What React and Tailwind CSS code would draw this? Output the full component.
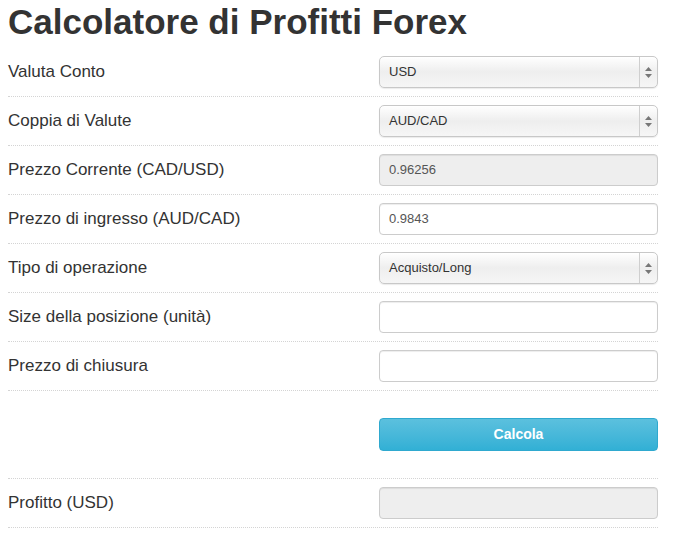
const rows = [
  { label: "Valuta Conto", type: "select", value: "USD" },
  { label: "Coppia di Valute", type: "select", value: "AUD/CAD" },
  { label: "Prezzo Corrente (CAD/USD)", type: "disabled", value: "0.96256" },
  { label: "Prezzo di ingresso (AUD/CAD)", type: "input", value: "0.9843" },
  { label: "Tipo di operazione", type: "select", value: "Acquisto/Long" },
  { label: "Size della posizione (unità)", type: "input", value: "" },
  { label: "Prezzo di chiusura", type: "input", value: "" },
];

const SelectBox = ({ value }) => (
  <div className="flex h-[32px] w-[279px] items-stretch rounded-[5px] border border-[#c8c8c8] bg-gradient-to-b from-[#ffffff] via-[#eeeeee] to-[#f6f6f6] shadow-[inset_0_1px_0_#fff,0_1px_1px_rgba(0,0,0,0.08)]">
    <div className="flex flex-1 items-center pl-[9px] text-[13px] text-[#333]">{value}</div>
    <div className="flex w-[18px] flex-col items-center justify-center border-l border-[#cfcfcf]">
      <svg width="7" height="11" viewBox="0 0 7 11">
        <path d="M3.5 0 L7 4 L0 4 Z" fill="#777" />
        <path d="M0 7 L7 7 L3.5 11 Z" fill="#777" />
      </svg>
    </div>
  </div>
);

const TextBox = ({ value, disabled }) => (
  <div
    className={`flex h-[32px] w-[279px] items-center rounded-[4px] border border-[#cccccc] pl-[9px] text-[13px] text-[#555] shadow-[inset_0_1px_1px_rgba(0,0,0,0.075)] ${
      disabled ? "bg-[#eeeeee]" : "bg-white"
    }`}
  >
    {value}
  </div>
);

export default function App() {
  return (
    <div className="min-h-screen w-[676px] bg-white px-2 font-['Liberation_Sans',Arial,sans-serif] text-[#333]">
      <h1 className="h-[48px] pt-[2px] text-[35px] font-bold leading-[40px] text-[#333]">
        Calcolatore di Profitti Forex
      </h1>

      <div className="w-[650px]">
        {rows.map((row) => (
          <div
            key={row.label}
            className="flex items-center justify-between border-b border-dotted border-[#d4d4d4] py-2"
          >
            <span className="text-[17px]">{row.label}</span>
            {row.type === "select" ? (
              <SelectBox value={row.value} />
            ) : (
              <TextBox value={row.value} disabled={row.type === "disabled"} />
            )}
          </div>
        ))}

        <div className="flex justify-end border-b border-dotted border-[#d4d4d4] pt-[27px] pb-[27px]">
          <button className="h-[33px] w-[279px] rounded-[4px] border border-[#2fa9cf] bg-gradient-to-b from-[#5bc0de] to-[#31b0d5] text-[14px] font-bold text-white">
            Calcola
          </button>
        </div>

        <div className="flex items-center justify-between border-b border-dotted border-[#d4d4d4] py-2">
          <span className="text-[17px]">Profitto (USD)</span>
          <TextBox value="" disabled />
        </div>
      </div>
    </div>
  );
}
